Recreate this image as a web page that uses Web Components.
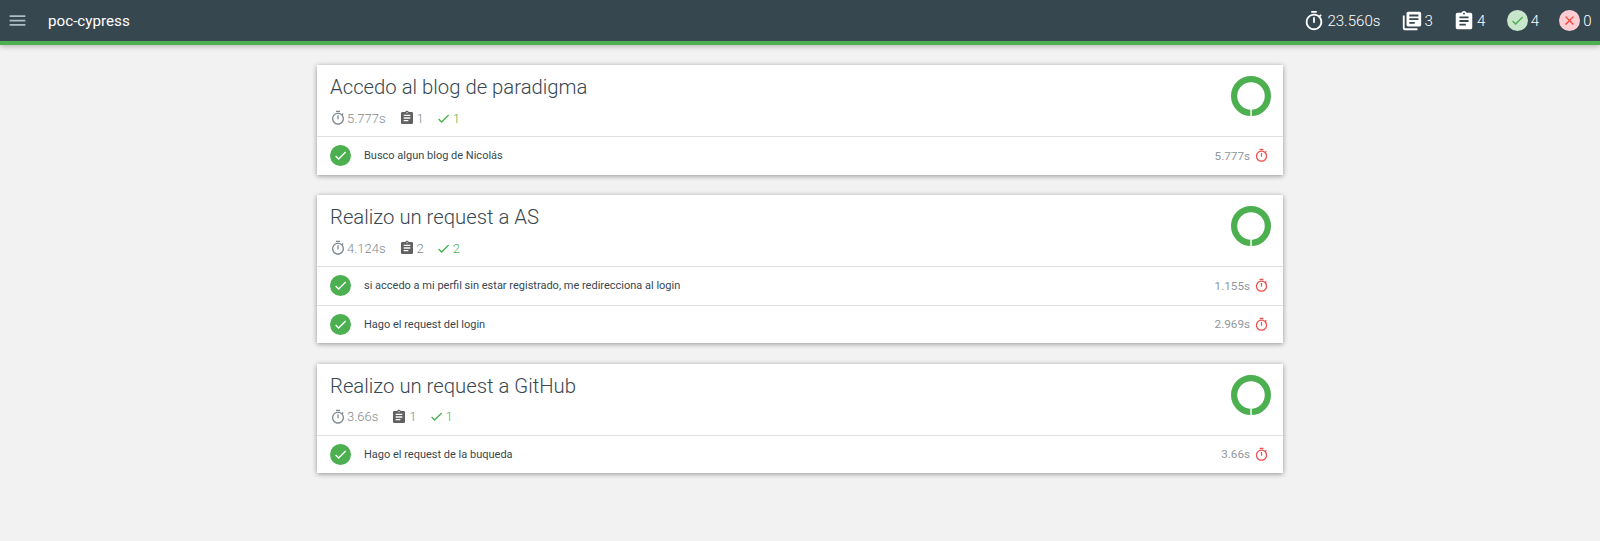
<!DOCTYPE html>
<html lang="es"><head><meta charset="utf-8"><title>poc-cypress</title>
<style>
html,body{margin:0;padding:0;height:541px;overflow:hidden;background:#f2f2f2;font-family:Roboto,"Liberation Sans",sans-serif}
main{display:flex;flex-direction:column;gap:20.5px;width:966px;margin:20px auto 0 317px}
</style></head><body>
<report-nav title="poc-cypress"></report-nav>
<main>
<suite-card title="Accedo al blog de paradigma" dur="5.777s" tests="1" pass="1">
  <test-row dur="5.777s">Busco algun blog de Nicolás</test-row>
</suite-card>
<suite-card title="Realizo un request a AS" dur="4.124s" tests="2" pass="2">
  <test-row dur="1.155s">si accedo a mi perfil sin estar registrado, me redirecciona al login</test-row>
  <test-row dur="2.969s">Hago el request del login</test-row>
</suite-card>
<suite-card title="Realizo un request a GitHub" dur="3.66s" tests="1" pass="1">
  <test-row dur="3.66s">Hago el request de la buqueda</test-row>
</suite-card>
</main>
<script>
const P={
timer:"M15 1H9v2h6V1zm-4 13h2V8h-2v6zm8.03-6.61l1.42-1.42c-.43-.51-.9-.99-1.41-1.41l-1.42 1.42C16.07 4.74 14.12 4 12 4c-4.97 0-9 4.03-9 9s4.02 9 9 9 9-4.03 9-9c0-2.12-.74-4.07-1.97-5.61zM12 20c-3.87 0-7-3.13-7-7s3.13-7 7-7 7 3.13 7 7-3.13 7-7 7z",
books:"M4 6H2v14c0 1.1.9 2 2 2h14v-2H4V6zm16-4H8c-1.1 0-2 .9-2 2v12c0 1.1.9 2 2 2h12c1.1 0 2-.9 2-2V4c0-1.1-.9-2-2-2zm-1 9H9V9h10v2zm-4 4H9v-2h6v2zm4-8H9V5h10v2z",
assign:"M19 3h-4.18C14.4 1.84 13.3 1 12 1c-1.3 0-2.4.84-2.82 2H5c-1.1 0-2 .9-2 2v14c0 1.1.9 2 2 2h14c1.1 0 2-.9 2-2V5c0-1.1-.9-2-2-2zm-7 0c.55 0 1 .45 1 1s-.45 1-1 1-1-.45-1-1 .45-1 1-1zm2 14H7v-2h7v2zm3-4H7v-2h10v2zm0-4H7V7h10v2z",
check:"M9 16.17L4.83 12l-1.42 1.41L9 19 21 7l-1.41-1.41z",
close:"M19 6.41L17.59 5 12 10.59 6.41 5 5 6.41 10.59 12 5 17.59 6.41 19 12 13.41 17.59 19 19 17.59 13.41 12z",
menu:"M3 18h18v-2H3v2zm0-5h18v-2H3v2zm0-7v2h18V6H3z"};
class MdIcon extends HTMLElement{connectedCallback(){
 const s=this.getAttribute('size')||18;
 this.attachShadow({mode:'open'}).innerHTML=`<style>:host{display:inline-flex;width:${s}px;height:${s}px;flex:none}svg{width:100%;height:100%;fill:currentColor;display:block}</style><svg viewBox="0 0 24 24"><path d="${P[this.getAttribute('name')]}"/></svg>`;
}}
customElements.define('md-icon',MdIcon);
class NavStat extends HTMLElement{connectedCallback(){
 const n=this.getAttribute('icon'),b=this.getAttribute('badge');
 const ic=b?`<span class="b" style="background:${b==='pass'?'#c8e6c9':'#ffcdd2'};color:${b==='pass'?'#4caf50':'#f44336'}"><md-icon name="${n}" size="15"></md-icon></span>`:`<md-icon name="${n}" size="22"></md-icon>`;
 this.attachShadow({mode:'open'}).innerHTML=`<style>:host{display:flex;align-items:center;gap:${b?3:2}px;color:#fff;font-size:15.1px;font-weight:300}.b{width:21px;height:21px;border-radius:50%;display:flex;align-items:center;justify-content:center}</style>${ic}<slot></slot>`;
}}
customElements.define('nav-stat',NavStat);
class ReportNav extends HTMLElement{connectedCallback(){
 this.attachShadow({mode:'open'}).innerHTML=`<style>:host{display:flex;align-items:center;height:41px;background:#37474f;border-bottom:4px solid #4caf50;box-shadow:0 2px 5px rgba(0,0,0,.22);color:#fff;position:relative}
 .m{color:#b0bec5;margin-left:7px;display:flex}h1{margin:0 0 0 20px;font-size:15.2px;font-weight:400;color:#fff;flex:1}
 .s{display:flex;align-items:center;gap:20px;margin-right:8.5px}
 .w{margin-right:1.5px}</style>
 <span class="m"><md-icon name="menu" size="21"></md-icon></span><h1>${this.getAttribute('title')}</h1>
 <div class="s"><nav-stat icon="timer">23.560s</nav-stat><nav-stat icon="books">3</nav-stat><nav-stat class="w" icon="assign">4</nav-stat><nav-stat icon="check" badge="pass">4</nav-stat><nav-stat icon="close" badge="fail">0</nav-stat></div>`;
}}
customElements.define('report-nav',ReportNav);
class SuiteCard extends HTMLElement{connectedCallback(){
 const a=k=>this.getAttribute(k);
 this.attachShadow({mode:'open'}).innerHTML=`<style>:host{display:block;background:#fff;box-shadow:0 1px 5px rgba(0,0,0,.4)}
 header{display:flex;justify-content:space-between;padding:0 12px 0 13px;height:71px;border-bottom:1px solid #e0e0e0}
 h3{margin:10px 0 0;font-size:20.3px;font-weight:300;line-height:25px;color:#37474f}
 .m{display:flex;align-items:center;gap:13px;margin-top:8px;font-size:13px;font-weight:300;color:#7f8a90;height:20px}
 .m span{display:flex;align-items:center}
 .t{gap:1px}.n{gap:2px}.p{gap:2px}
 .n md-icon{color:#616161}.p{color:#4caf50;margin-left:-1px}
 svg.r{width:40px;height:40px;margin-top:11px;display:block}</style>
 <header><div><h3>${a('title')}</h3><div class="m"><span class="t"><md-icon name="timer" size="16"></md-icon>${a('dur')}</span><span class="n"><md-icon name="assign" size="16"></md-icon>${a('tests')}</span><span class="p"><md-icon name="check" size="15"></md-icon>${a('pass')}</span></div></div>
 <svg class="r" viewBox="0 0 41 41"><circle cx="20.5" cy="20.5" r="17.3" fill="none" stroke="#4caf50" stroke-width="6.4"/><rect x="19.8" y="34" width="1.5" height="7" fill="#fff"/></svg></header><slot></slot>`;
}}
customElements.define('suite-card',SuiteCard);
class TestRow extends HTMLElement{connectedCallback(){
 this.attachShadow({mode:'open'}).innerHTML=`<style>:host{display:flex;align-items:center;height:37.5px;padding:0 14px 0 13px;font-size:11px;color:#37474f}
 :host(:not(:last-child)){border-bottom:1px solid #e0e0e0}
 .c{width:21px;height:21px;border-radius:50%;background:#4caf50;color:#fff;display:flex;align-items:center;justify-content:center;margin-right:13px}
 .x{flex:1}.d{color:#8f989d;font-size:11.7px;margin-right:4px}.i{color:#ef5350;display:flex}</style>
 <span class="c"><md-icon name="check" size="15"></md-icon></span><span class="x"><slot></slot></span><span class="d">${this.getAttribute('dur')}</span><span class="i"><md-icon name="timer" size="15"></md-icon></span>`;
}}
customElements.define('test-row',TestRow);
</script>
</body></html>
